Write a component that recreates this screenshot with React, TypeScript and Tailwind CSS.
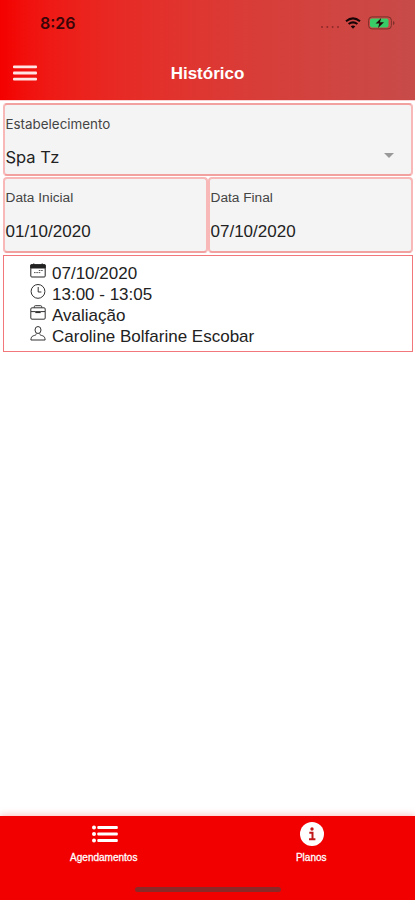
import { ReactNode } from "react";

const CalendarIcon = () => (
  <svg width="16" height="16" viewBox="0 0 16 16" fill="none" stroke="#222">
    <rect x="0.8" y="1.8" width="14.4" height="12.2" rx="1" />
    <path d="M0.8 1.8h14.4v3.2H0.8z" fill="#222" />
    <path d="M3.8 0.4v2M12.2 0.4v2" />
    <path d="M8.8 7.5h4M4 9.6h7" stroke="#555" strokeDasharray="1.6 0.7" />
  </svg>
);

const ClockIcon = () => (
  <svg width="16" height="16" viewBox="0 0 16 16" fill="none" stroke="#333">
    <circle cx="8" cy="7.4" r="6.9" />
    <path d="M8.2 3v5h3.2" />
  </svg>
);

const BriefcaseIcon = () => (
  <svg width="16" height="16" viewBox="0 0 16 16" fill="none" stroke="#333">
    <rect x="0.8" y="2.8" width="14.4" height="11.4" rx="1.2" />
    <path d="M4.3 2.6V1.7q0-1 1-1h5.4q1 0 1 1v0.9" />
    <path d="M1 6.6h4.5M10.5 6.6h4.5" />
    <path d="M5.3 7.1h5.4" strokeWidth="2" />
  </svg>
);

const PersonIcon = () => (
  <svg width="16" height="16" viewBox="0 0 16 16" fill="none" stroke="#333">
    <ellipse cx="8" cy="4" rx="3" ry="3.5" />
    <path d="M6.3 7.5c0 1.7-1.2 1.7-3 2.3-1.7.6-2.2 1.8-2.4 4.2h14.2c-.2-2.4-.7-3.6-2.4-4.2-1.8-.6-3-.6-3-2.3" />
  </svg>
);

const items = [
  { icon: <CalendarIcon />, text: "07/10/2020" },
  { icon: <ClockIcon />, text: "13:00 - 13:05" },
  { icon: <BriefcaseIcon />, text: "Avaliação" },
  { icon: <PersonIcon />, text: "Caroline Bolfarine Escobar" },
];

const StatusBar = () => (
  <div className="flex h-[46px] items-center pl-10 pr-[20px]">
    <span className="text-[16px] leading-none font-semibold font-['Inter',sans-serif] text-[#3a0508]">8:26</span>
    <div className="ml-auto flex items-center">
      <svg width="20" height="12" viewBox="0 0 20 12" fill="#8e2a2a">
        <circle cx="2" cy="10" r="1" />
        <circle cx="7.3" cy="10" r="1" />
        <circle cx="12.6" cy="10" r="1" />
        <circle cx="18" cy="10" r="1" />
      </svg>
      <svg className="ml-[5px]" width="16" height="12" viewBox="0 0 16 12" fill="none" stroke="#170406" strokeWidth="2.1">
        <path d="M1 4.2q7-5.6 14 0" />
        <path d="M3.6 7q4.4-3.4 8.8 0" />
        <path d="M8 11.7L5.7 9.3q2.3-1.7 4.6 0z" fill="#170406" stroke="none" />
      </svg>
      <svg className="ml-[7px]" width="27" height="14" viewBox="0 0 27 14">
        <rect x="0.6" y="0.9" width="22.8" height="12" rx="3.4" fill="none" stroke="#7c3029" />
        <rect x="2" y="2.4" width="18.5" height="9" rx="1.8" fill="#39cd68" />
        <path d="M25 5v4q1.6-.6 1.6-2T25 5z" fill="#7c3029" />
        <path d="M13.2 2L7.6 7.6h3.7L10 12l6-5.8h-4z" fill="#240908" />
      </svg>
    </div>
  </div>
);

type FieldProps = {
  label: string;
  value: string;
  children?: ReactNode;
};

const Field = ({ label, value, children }: FieldProps) => (
  <div className="flex h-full flex-1 flex-col rounded-[4px] border-2 border-[#f8b8b8] border-b-[#f3a0a0] bg-[#f4f4f4]">
    <span className="mt-[10px] pl-[0.5px] text-[13.7px] leading-[18px] text-[#444]">{label}</span>
    <div className="mt-[15px] flex items-center justify-between">
      <span className="pl-[0.5px] text-[17px] leading-5 text-[#222]">{value}</span>
      {children}
    </div>
  </div>
);

const App = () => {
  return (
    <div className="flex h-[900px] w-[415px] flex-col overflow-hidden bg-white font-['Liberation_Sans',Arial,sans-serif]">
      <header className="h-[100px] shrink-0 bg-linear-to-r from-[#f40000] to-[#c74b49]">
        <StatusBar />
        <div className="flex h-[54px] items-center px-[13px]">
          <svg className="shrink-0" width="24" height="16" viewBox="0 0 24 16" fill="#ffe4e4">
            <rect y="0.4" width="24" height="2.8" rx="1" />
            <rect y="6.6" width="24" height="2.8" rx="1" />
            <rect y="12.8" width="24" height="2.8" rx="1" />
          </svg>
          <h1 className="flex-1 pt-[2px] pr-6 text-center text-[17px] font-bold text-white">Histórico</h1>
        </div>
      </header>

      <main className="flex flex-1 flex-col gap-px border-t border-[#fbd0d0] pt-[2px] pr-[2px] pl-[3px]">
        <div className="h-[73px] font-['Inter',sans-serif]">
          <div className="flex h-full flex-col rounded-[4px] border-2 border-[#f8b8b8] border-t-[#f3a0a0] border-b-[#f3a0a0] bg-[#f4f4f4]">
            <span className="mt-[10px] pl-[0.5px] text-[13.4px] leading-[18px] text-[#444]">Estabelecimento</span>
            <div className="mt-[14px] flex items-center justify-between">
              <span className="pl-[0.5px] text-[16.5px] leading-5 text-[#222]">Spa Tz</span>
              <svg className="mr-[17px] mb-[3px]" width="10" height="5" viewBox="0 0 10 5" fill="#999">
                <path d="M0 0h10L5 5z" />
              </svg>
            </div>
          </div>
        </div>
        <div className="flex h-[76px]">
          <Field label="Data Inicial" value="01/10/2020" />
          <Field label="Data Final" value="07/10/2020" />
        </div>
        <div className="mt-px h-[97px] border border-[#f2777b] pt-[6px] pl-[26px]">
          {items.map((item) => (
            <div key={item.text} className="flex h-[21px] gap-[6px] text-[17px] leading-[21px] text-[#222]">
              <div className="pt-px">{item.icon}</div>
              <span className="pt-px">{item.text}</span>
            </div>
          ))}
        </div>
      </main>

      <footer className="flex h-[84px] shrink-0 flex-col bg-[#f20000] shadow-[0_-1px_7px_rgba(242,0,0,0.25)]">
        <div className="flex flex-1 text-[10px] text-white [-webkit-text-stroke:0.3px_white]">
          <div className="flex flex-1 flex-col items-center pt-[9px]">
            <svg className="ml-0.5" width="26" height="18" viewBox="0 0 26 18" fill="#fff">
              <circle cx="2" cy="2.4" r="2" />
              <circle cx="2" cy="9" r="2" />
              <circle cx="2" cy="15.6" r="2" />
              <rect x="5.3" y="0.9" width="20.5" height="3" rx="1" />
              <rect x="5.3" y="7.5" width="20.5" height="3" rx="1" />
              <rect x="5.3" y="14.1" width="20.5" height="3" rx="1" />
            </svg>
            <span className="mt-[9px] leading-3">Agendamentos</span>
          </div>
          <div className="flex flex-1 flex-col items-center pt-[6px]">
            <svg className="ml-0.5" width="24" height="24" viewBox="0 0 24 24">
              <circle cx="12" cy="12" r="12" fill="#fff" />
              <circle cx="12" cy="7" r="1.7" fill="#c01818" />
              <path d="M9.3 10.7h3.2v6.2M9 17.3h6.4" fill="none" stroke="#c01818" strokeWidth="2" />
            </svg>
            <span className="mt-[6px] leading-3">Planos</span>
          </div>
        </div>
        <div className="mx-auto mb-2 h-[5px] w-[146px] rounded-full bg-[#8b2929]" />
      </footer>
    </div>
  );
};

export default App;
